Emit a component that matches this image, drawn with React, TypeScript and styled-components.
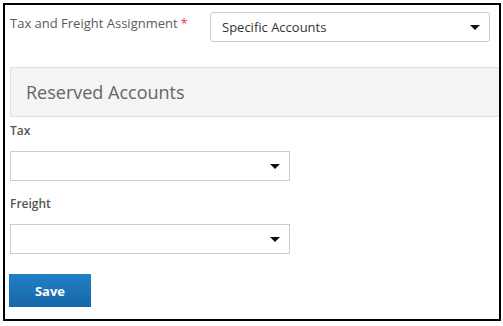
import styled, { createGlobalStyle } from "styled-components";

const GlobalStyle = createGlobalStyle`
  html, body {
    margin: 0;
    padding: 0;
    background: #fff;
  }
  body {
    font-family: "Open Sans", "Liberation Sans", sans-serif;
  }
`;

const Frame = styled.div`
  box-sizing: border-box;
  width: 498px;
  height: 318px;
  margin: 3px 0 0 3px;
  border: 2px solid #000;
  padding: 7px 0 0 5px;
`;

const TopRow = styled.div`
  display: flex;
  align-items: flex-start;
`;

const TopLabel = styled.label`
  width: 200px;
  font-size: 13px;
  line-height: 18px;
  color: #5b5b5b;
  padding-top: 2px;

  span {
    color: #f0323c;
    margin-left: 3px;
  }
`;

const SelectBox = styled.div<{ $rounded?: boolean; $width: number }>`
  box-sizing: border-box;
  width: ${(p) => p.$width}px;
  height: 30px;
  border: 1px solid #ccc;
  border-radius: ${(p) => (p.$rounded ? "3px" : "0")};
  background: #fff;
  display: flex;
  align-items: center;
  padding: 0 11px;
  font-size: 13px;
  color: #333;
`;

const Caret = styled.span`
  margin-left: auto;
  width: 0;
  height: 0;
  border-left: 5px solid transparent;
  border-right: 5px solid transparent;
  border-top: 5px solid #111;
  margin-right: -2px;
`;

const Panel = styled.div`
  margin-top: 25px;
  height: 48px;
  border: 1px solid #dedede;
  border-right: none;
  background: #f4f4f4;
  display: flex;
  align-items: center;
  padding-left: 15px;
  font-size: 18px;
  color: #666;
`;

const Field = styled.div<{ $gap: number }>`
  margin-top: ${(p) => p.$gap}px;
`;

const FieldLabel = styled.div`
  font-size: 12px;
  font-weight: 600;
  color: #555;
  line-height: 16px;
  margin-bottom: 12px;
`;

const SaveButton = styled.button`
  margin: 20px 0 0 -1px;
  width: 82px;
  height: 33px;
  border: none;
  background: linear-gradient(180deg, #1f80c6 0%, #1767a8 100%);
  color: #fff;
  font-family: "Open Sans", "Liberation Sans", sans-serif;
  font-weight: 700;
  font-size: 13px;
  cursor: pointer;
`;

export default function App() {
  return (
    <>
      <GlobalStyle />
      <Frame>
        <TopRow>
          <TopLabel>
            Tax and Freight Assignment<span>*</span>
          </TopLabel>
          <SelectBox $rounded $width={280}>
            Specific Accounts
            <Caret />
          </SelectBox>
        </TopRow>
        <Panel>Reserved Accounts</Panel>
        <Field $gap={6}>
          <FieldLabel>Tax</FieldLabel>
          <SelectBox $width={280}>
            <Caret />
          </SelectBox>
        </Field>
        <Field $gap={15}>
          <FieldLabel>Freight</FieldLabel>
          <SelectBox $width={280}>
            <Caret />
          </SelectBox>
        </Field>
        <SaveButton>Save</SaveButton>
      </Frame>
    </>
  );
}
